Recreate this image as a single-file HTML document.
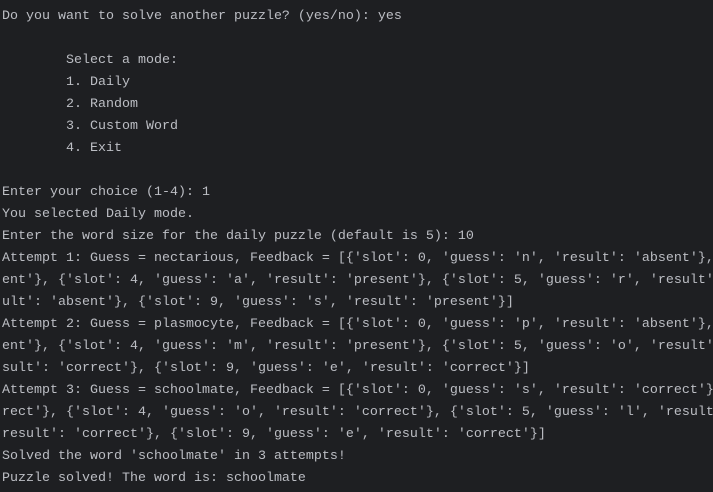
<!DOCTYPE html>
<html><head><style>
html,body{margin:0;padding:0;background:#1e1f22;width:713px;height:492px;overflow:hidden}
pre{margin:0;position:absolute;left:2px;top:6px;font-family:"Liberation Mono",monospace;font-size:13.33px;line-height:22px;color:#bcbec4;white-space:pre}
</style></head><body><pre>Do you want to solve another puzzle? (yes/no): yes

        Select a mode:
        1. Daily
        2. Random
        3. Custom Word
        4. Exit

Enter your choice (1-4): 1
You selected Daily mode.
Enter the word size for the daily puzzle (default is 5): 10
Attempt 1: Guess = nectarious, Feedback = [{'slot': 0, 'guess': 'n', 'result': 'absent'}, {
ent'}, {'slot': 4, 'guess': 'a', 'result': 'present'}, {'slot': 5, 'guess': 'r', 'result': '
ult': 'absent'}, {'slot': 9, 'guess': 's', 'result': 'present'}]
Attempt 2: Guess = plasmocyte, Feedback = [{'slot': 0, 'guess': 'p', 'result': 'absent'}, {
ent'}, {'slot': 4, 'guess': 'm', 'result': 'present'}, {'slot': 5, 'guess': 'o', 'result': '
sult': 'correct'}, {'slot': 9, 'guess': 'e', 'result': 'correct'}]
Attempt 3: Guess = schoolmate, Feedback = [{'slot': 0, 'guess': 's', 'result': 'correct'}, {
rect'}, {'slot': 4, 'guess': 'o', 'result': 'correct'}, {'slot': 5, 'guess': 'l', 'result': 
result': 'correct'}, {'slot': 9, 'guess': 'e', 'result': 'correct'}]
Solved the word 'schoolmate' in 3 attempts!
Puzzle solved! The word is: schoolmate</pre></body></html>
